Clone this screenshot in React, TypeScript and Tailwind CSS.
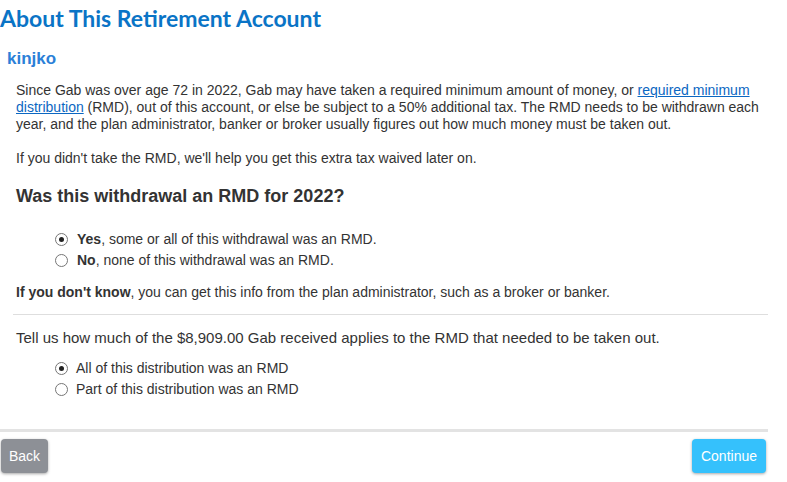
import React, { useState } from 'react';

const Radio = ({ checked, onClick }: { checked: boolean; onClick: () => void }) => (
  <span
    onClick={onClick}
    className="inline-flex items-center justify-center w-[13px] h-[13px] rounded-full border border-[#767676] bg-white shrink-0 cursor-pointer"
  >
    {checked && <span className="w-[5px] h-[5px] rounded-full bg-[#222]" />}
  </span>
);

export default function App() {
  const [rmd, setRmd] = useState('yes');
  const [amount, setAmount] = useState('all');

  return (
    <div className="w-[787px] h-[482px] bg-white text-[#333] font-['Liberation_Sans',Arial,sans-serif] overflow-hidden">
      <h1 className="text-[23px] leading-[26px] pt-[5px] text-[#0a74c6] font-['Lato','Liberation_Sans',sans-serif] font-bold">
        About This Retirement Account
      </h1>
      <h2 className="mt-[18px] ml-[7px] text-[17px] leading-[20px] font-bold text-[#2b80d8]">kinjko</h2>

      <div className="pl-[16px] pr-[17px] mt-[13px] text-[14px] leading-[17px]">
        <p>
          Since Gab was over age 72 in 2022, Gab may have taken a required minimum amount of money, or{' '}
          <a href="#" className="text-[#0b67c2] underline">required minimum distribution</a>{' '}
          (RMD), out of this account, or else be subject to a 50% additional tax. The RMD needs to be withdrawn each year, and the plan administrator, banker or broker usually figures out how much money must be taken out.
        </p>
        <p className="mt-[17px]">If you didn't take the RMD, we'll help you get this extra tax waived later on.</p>

        <h3 className="mt-[18px] text-[18px] leading-[22px] font-bold text-[#333]">Was this withdrawal an RMD for 2022?</h3>

        <div className="mt-[24px] ml-[39px] flex flex-col gap-[4px]">
          <label className="flex items-center gap-[9px]">
            <Radio checked={rmd === 'yes'} onClick={() => setRmd('yes')} />
            <span><b>Yes</b>, some or all of this withdrawal was an RMD.</span>
          </label>
          <label className="flex items-center gap-[9px]">
            <Radio checked={rmd === 'no'} onClick={() => setRmd('no')} />
            <span><b>No</b>, none of this withdrawal was an RMD.</span>
          </label>
        </div>

        <p className="mt-[15px]"><b>If you don't know</b>, you can get this info from the plan administrator, such as a broker or banker.</p>
      </div>

      <div className="ml-[13px] mr-[19px] mt-[13px] border-t border-[#dedede]" />

      <p className="ml-[16px] mt-[14px] text-[15px] leading-[18px]">
        Tell us how much of the $8,909.00 Gab received applies to the RMD that needed to be taken out.
      </p>

      <div className="mt-[13px] ml-[55px] flex flex-col gap-[4px] text-[14px] leading-[17px]">
        <label className="flex items-center gap-[8px]">
          <Radio checked={amount === 'all'} onClick={() => setAmount('all')} />
          <span>All of this distribution was an RMD</span>
        </label>
        <label className="flex items-center gap-[8px]">
          <Radio checked={amount === 'part'} onClick={() => setAmount('part')} />
          <span>Part of this distribution was an RMD</span>
        </label>
      </div>

      <div className="mt-[31px] mr-[19px] border-t-[3px] border-[#e3e3e3]" />

      <div className="flex justify-between mt-[7px] pl-[1px] pr-[21px]">
        <button className="h-[34px] px-[8px] rounded-[4px] bg-[#8d9096] text-white text-[14px] shadow-[0_1px_3px_rgba(0,0,0,0.35)]">
          Back
        </button>
        <button className="h-[34px] px-[9px] rounded-[4px] bg-[#35c1fc] text-white text-[14px] shadow-[0_1px_3px_rgba(0,0,0,0.35)]">
          Continue
        </button>
      </div>
    </div>
  );
}
